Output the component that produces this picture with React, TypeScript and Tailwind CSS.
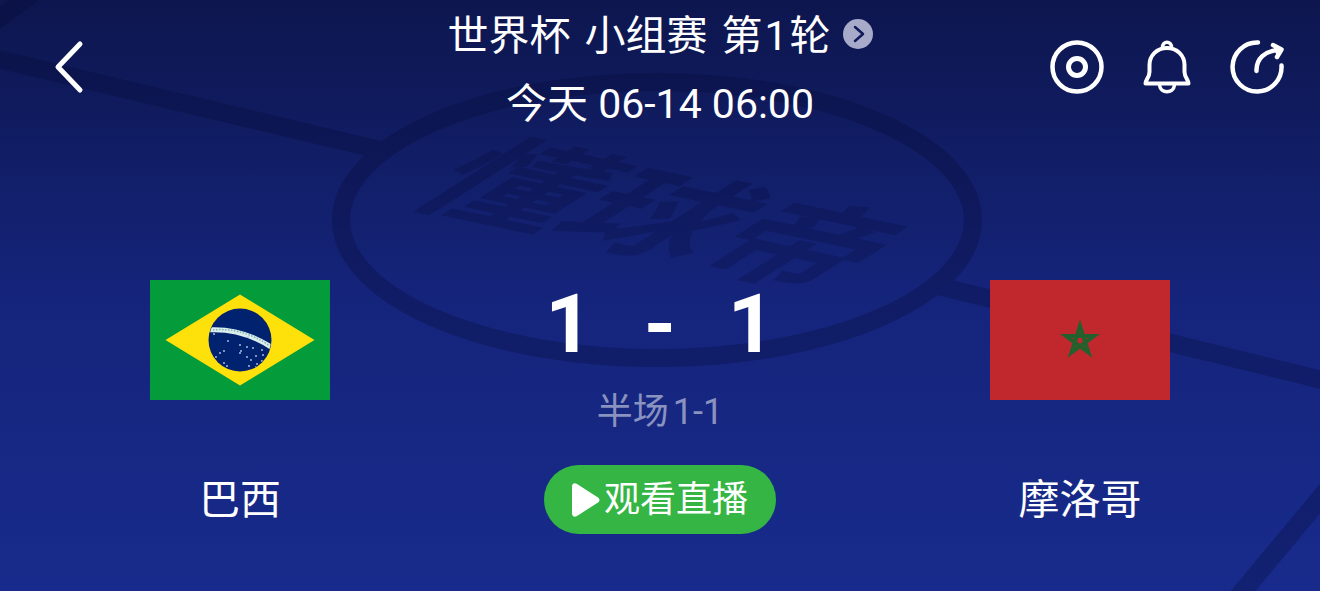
import type { ReactNode } from "react";

type Team = {
  name: string;
  flag: ReactNode;
};

// [x, y] of the small stars on the blue disc
const STARS = [
  [64, 54], [78, 61], [66, 77], [63, 80], [70, 73], [74, 83], [77, 86], [90, 65],
  [97, 67], [91, 71], [103, 68], [90, 73], [97, 77], [107, 84], [112, 81], [109, 90],
  [106, 76], [112, 70], [113, 75], [101, 80], [106, 87], [99, 86], [74, 71], [98, 57],
];

function BrazilFlag() {
  return (
    <svg viewBox="0 0 180 120" className="block h-[120px] w-[180px]" role="img" aria-label="巴西">
      <defs>
        <clipPath id="disc">
          <circle cx="90" cy="60" r="31" />
        </clipPath>
      </defs>
      <rect width="180" height="120" fill="#049b3a" />
      <path d="M90 14.5 164.500 60 90 105.500 15.500 60Z" fill="#fee00a" />
      <circle cx="90" cy="60" r="31.500" fill="#01226f" />
      <g clipPath="url(#disc)">
        <path d="M56 50Q92 47 124 69" fill="none" stroke="#dcefee" strokeWidth="5" />
        <path d="M63 50Q92 47 120 66" fill="none" stroke="#7fb3ae" strokeWidth="1.500" strokeDasharray="1.500 1.500" />
        {STARS.map(([x, y]) => (
          <circle key={`${x}-${y}`} cx={x} cy={y} r="0.900" fill="#b9c9ee" />
        ))}
      </g>
    </svg>
  );
}

function MoroccoFlag() {
  return (
    <svg viewBox="0 0 180 120" className="block h-[120px] w-[180px]" role="img" aria-label="摩洛哥">
      <rect width="180" height="120" fill="#c1282e" />
      <path
        d="M90 46 98.500 72.500 76 56H104L81.500 72.500Z"
        fill="none"
        stroke="#24602c"
        strokeWidth="4"
      />
    </svg>
  );
}

// centre circle, touch lines and the lettering painted on the grass
function Pitch() {
  return (
    <svg
      viewBox="0 0 1320 591"
      preserveAspectRatio="xMidYMid slice"
      className="pointer-events-none absolute inset-0 h-full w-full"
      aria-hidden="true"
    >
      <g opacity="0.3" fill="none" stroke="#060b36" strokeWidth="18">
        <ellipse cx="657" cy="220" rx="316" ry="138" />
        <path d="M-10 57 380 150M934 285 1330 382" />
        <path d="M-10 25 40-12" />
        <path d="M1238 597 1328 489" strokeWidth="19" />
      </g>
      <text
        transform="matrix(1.42 .3 -1.25 .8 402 200)"
        fontSize="100"
        className="font-['Noto_Sans_CJK_SC',sans-serif] font-bold"
        fill="#060b36"
        opacity="0.25"
      >
        懂球帝
      </text>
    </svg>
  );
}

function TeamColumn({ team }: { team: Team }) {
  return (
    <div className="flex flex-col items-center gap-[76px]">
      {team.flag}
      <h2 className="text-[41px] leading-[48px]">{team.name}</h2>
    </div>
  );
}

const home: Team = { name: "巴西", flag: <BrazilFlag /> };
const away: Team = { name: "摩洛哥", flag: <MoroccoFlag /> };

export default function App() {
  return (
    <div className="relative min-h-screen overflow-hidden bg-linear-to-b from-[#0d164e] via-[#15247b] via-50% to-[#182b8c] font-['Roboto','Noto_Sans_CJK_SC',sans-serif] text-white">
      <Pitch />

      <header className="relative grid grid-cols-[1fr_auto_1fr] pt-3">
        <button aria-label="返回" className="ml-[52px] mt-7 h-14 w-8 justify-self-start">
          <svg viewBox="0 0 32 56" className="h-14 w-8" fill="none" stroke="currentColor" strokeWidth="5" strokeLinecap="round" strokeLinejoin="round">
            <path d="M28 4 6 27 28 50" />
          </svg>
        </button>

        <div className="flex flex-col items-center gap-5 text-[41px] leading-[48px]">
          <button className="flex items-center gap-3">
            <h1 className="flex gap-3.5">
              <span>世界杯</span>
              <span>小组赛</span>
              <span className="flex gap-0.5">
                <span>第</span>
                <span>1</span>
                <span>轮</span>
              </span>
            </h1>
            <svg viewBox="0 0 30 30" className="-mt-1 size-[30px]" fill="none">
              <circle cx="15" cy="15" r="15" fill="#a8aac9" />
              <path d="M12 8 20 15 12 22" stroke="#10195a" strokeWidth="2.500" strokeLinecap="round" strokeLinejoin="round" />
            </svg>
          </button>
          <p>今天 06-14 06:00</p>
        </div>

        <div className="mr-9 mt-7 flex h-[54px] gap-9 justify-self-end">
          <button aria-label="直播">
            <svg viewBox="0 0 54 54" className="size-[54px]" fill="none" stroke="currentColor" strokeWidth="4.500">
              <circle cx="27" cy="27" r="24.500" />
              <circle cx="27" cy="27" r="8.500" strokeWidth="5" />
            </svg>
          </button>
          <button aria-label="提醒">
            <svg viewBox="0 0 54 54" className="size-[54px]" fill="none" stroke="currentColor" strokeWidth="4" strokeLinecap="round" strokeLinejoin="round">
              <path d="M27 8C17 8 9.500 15.500 9.500 25V32C9.500 37 5.500 40 5.500 43.500H48.500C48.500 40 44.500 37 44.500 32V25C44.500 15.500 37 8 27 8Z" />
              <path d="M22.500 7.500C22.500 .500 31.500 .500 31.500 7.500" strokeWidth="3.500" />
              <path d="M19.500 45C20.500 54 33.500 54 34.500 45" strokeWidth="3.500" />
            </svg>
          </button>
          <button aria-label="分享">
            <svg viewBox="0 0 54 54" className="size-[54px]" fill="none" stroke="currentColor" strokeWidth="4.500" strokeLinecap="round" strokeLinejoin="round">
              <path d="M28 2.500A24.500 24.500 0 1 0 51.500 25.500" />
              <path d="M26.500 31C26 19 35 10.500 49 10" />
              <path d="M43 5 51.500 9.500 47 17" fill="currentColor" />
            </svg>
          </button>
        </div>
      </header>

      <main className="relative mt-[152px] grid grid-cols-[4fr_3fr_4fr]">
        <TeamColumn team={home} />

        <div className="flex flex-col items-center">
          <div className="grid w-[274px] grid-cols-3 text-center text-[82px] font-bold leading-[88px]">
            <span>1</span>
            <span>-</span>
            <span>1</span>
          </div>
          <p className="mt-[22px] flex gap-1 text-[36px] leading-[44px] text-white/50">
            <span>半场</span>
            <span>1-1</span>
          </p>
          <button className="mt-[31px] flex h-[69px] items-center gap-1 rounded-full bg-[#34b544] px-7 text-[36px] leading-[44px]">
            <svg viewBox="0 0 28 34" className="h-[34px] w-7" fill="currentColor">
              <path d="M0 3.500C0 .500 2.500-.500 5 1L26 14.500C28 16 28 18 26 19.500L5 33C2.500 34.500 0 33.500 0 30.500Z" />
            </svg>
            观看直播
          </button>
        </div>

        <TeamColumn team={away} />
      </main>
    </div>
  );
}
